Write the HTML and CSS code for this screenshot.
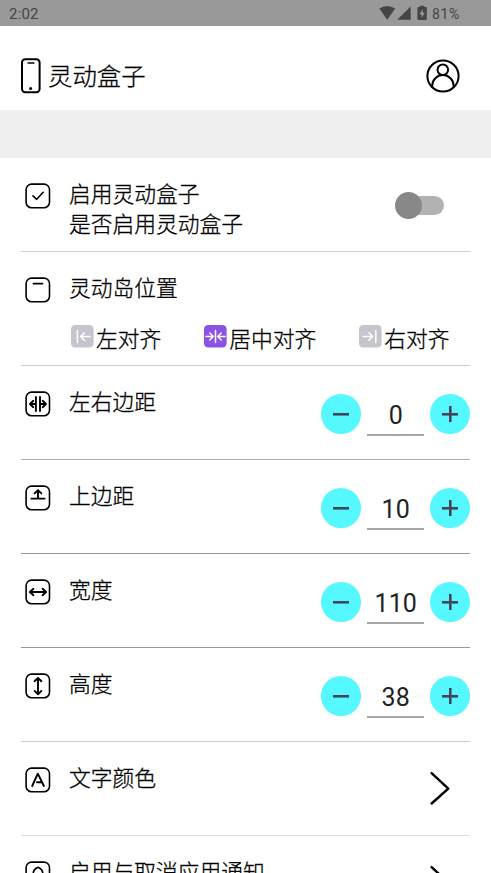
FILE: index.html
```html
<!DOCTYPE html>
<html lang="zh-CN">
<head>
<meta charset="utf-8">
<title>灵动盒子</title>
<link rel="stylesheet" href="styles.css">
</head>
<body>
<div class="status">
  <span class="clock">2:02</span>
  <svg class="signals" width="50" height="26" viewBox="0 0 50 26">
    <path d="M.3 8.6Q8.3 3.2 16.2 8.6L8.3 19.8z"/>
    <path d="M31.7 6.4v13.4H18.2z"/>
    <path fill-rule="evenodd" d="M40.8 7V5.8h4.4V7h1.6q1 0 1 1v11q0 1-1 1h-7.4q-1 0-1-1V8q0-1 1-1zM43.8 9l-3.3 5.2h2v3.8l3.3-5.2h-2z"/>
  </svg>
  <span class="charge">81%</span>
</div>
<header class="header">
  <svg class="phone" width="20" height="36" viewBox="0 0 20 36"><rect x="1" y="1.2" width="17.6" height="33" rx="3.2"/><path d="M7 5h6"/><circle class="dot" cx="9.6" cy="30.6" r="1.5"/></svg>
  <h1>灵动盒子</h1>
  <svg class="user" width="34" height="34" viewBox="0 0 34 34"><circle cx="17" cy="17" r="15.6"/><circle cx="16.8" cy="10.8" r="5.3"/><path d="M6.2 28.2v-1.4a10.7 10.7 0 0 1 21.4 0v1.4"/></svg>
</header>
<div class="banner"></div>
<main class="list">
  <section class="row tone-light">
    <svg class="icon" width="26" height="26" viewBox="0 0 26 26"><rect x="1.1" y="1.1" width="23.4" height="23.6" rx="5.5"/><path d="M8 12.8l3.7 3.5 6.5-7"/></svg>
    <div class="label">启用灵动盒子<br>是否启用灵动盒子</div>
    <div class="switch"><span class="thumb"></span></div>
  </section>
  <section class="row tall tone-light">
    <svg class="icon" width="26" height="26" viewBox="0 0 26 26"><rect x="1.1" y="1.1" width="23.4" height="23.6" rx="5.5"/><path class="heavy" d="M8.5 6.6h9"/></svg>
    <div class="label">灵动岛位置</div>
    <div class="options">
      <div class="option"><svg width="23" height="23" viewBox="0 0 23 23"><rect width="22.6" height="22.6" rx="4.2"/><path d="M6.4 5.5v12M19 11.5H9.7M13.4 7.7l-3.8 3.8 3.8 3.8"/></svg><span>左对齐</span></div>
      <div class="option active"><svg width="23" height="23" viewBox="0 0 23 23"><rect width="22.6" height="22.6" rx="4.2"/><path d="M11.5 5.5v12M2 11.5h7M5.8 8l3.5 3.5L5.8 15M21 11.5h-7M17.2 8l-3.5 3.5 3.5 3.5"/></svg><span>居中对齐</span></div>
      <div class="option"><svg width="23" height="23" viewBox="0 0 23 23"><rect width="22.6" height="22.6" rx="4.2"/><path d="M16.8 5.5v12M4 11.5h9.5M9.9 7.7l3.8 3.8-3.8 3.8"/></svg><span>右对齐</span></div>
    </div>
  </section>
  <section class="row tone-mid">
    <svg class="icon" width="26" height="26" viewBox="0 0 26 26"><rect x="1.1" y="1.1" width="23.4" height="23.6" rx="5.5"/><path class="heavy" d="M10.9 6v14M15 6v14M10 13H5M8.3 9.8L5 13l3.3 3.2M16 13h5M17.7 9.8L21 13l-3.3 3.2"/></svg>
    <div class="label">左右边距</div>
    <div class="stepper"><button class="minus"></button><span class="value">0</span><button class="plus"></button></div>
  </section>
  <section class="row tone-dark">
    <svg class="icon" width="26" height="26" viewBox="0 0 26 26"><rect x="1.1" y="1.1" width="23.4" height="23.6" rx="5.5"/><path class="heavy" d="M6.4 13.6h13.2M13 13.6V5.5M9.6 8.4L13 5.2l3.4 3.2"/></svg>
    <div class="label">上边距</div>
    <div class="stepper"><button class="minus"></button><span class="value">10</span><button class="plus"></button></div>
  </section>
  <section class="row tone-dark">
    <svg class="icon" width="26" height="26" viewBox="0 0 26 26"><rect x="1.1" y="1.1" width="23.4" height="23.6" rx="5.5"/><path class="heavy" d="M5 13h16M8.4 9.8L4.9 13l3.5 3.2M17.6 9.8l3.5 3.2-3.5 3.2"/></svg>
    <div class="label">宽度</div>
    <div class="stepper"><button class="minus"></button><span class="value">110</span><button class="plus"></button></div>
  </section>
  <section class="row tone-light">
    <svg class="icon" width="26" height="26" viewBox="0 0 26 26"><rect x="1.1" y="1.1" width="23.4" height="23.6" rx="5.5"/><path class="heavy" d="M13 5v16M9.6 8.2L13 4.9l3.4 3.3M9.6 17.9l3.4 3.3 3.4-3.3"/></svg>
    <div class="label">高度</div>
    <div class="stepper"><button class="minus"></button><span class="value">38</span><button class="plus"></button></div>
  </section>
  <section class="row tone-pale">
    <svg class="icon" width="26" height="26" viewBox="0 0 26 26"><rect x="1.1" y="1.1" width="23.4" height="23.6" rx="5.5"/><path class="heavy" d="M7.2 19L12.8 6.7 18.9 19M12 15.2h5"/></svg>
    <div class="label">文字颜色</div>
    <svg class="chevron" width="22" height="36" viewBox="0 0 22 36"><path d="M2.6 3.1L19.3 18.6 2.6 33.5"/></svg>
  </section>
  <section class="row tone-pale">
    <svg class="icon" width="26" height="26" viewBox="0 0 26 26"><rect x="1.1" y="1.1" width="23.4" height="23.6" rx="5.5"/><path d="M7 18.5h12M8.2 18.5v-6.3Q8.6 8.3 12 6.8q1-.9 2 0 3.4 1.5 3.8 5.4v6.3"/></svg>
    <div class="label">启用与取消应用通知</div>
    <svg class="chevron" width="22" height="36" viewBox="0 0 22 36"><path d="M2.6 3.1L19.3 18.6 2.6 33.5"/></svg>
  </section>
</main>
</body>
</html>
```
FILE: styles.css
```css
* { box-sizing: border-box; }
html, body { height: 100%; overflow: hidden; }
body {
  margin: 0;
  background: #fff;
  color: #000;
  font-family: Roboto, "Noto Sans CJK SC", sans-serif;
}
svg { display: block; flex: none; }
.status {
  height: 26px;
  display: flex;
  align-items: center;
  padding: 0 30px 0 9px;
  background: #999;
  color: #444;
  font-size: 15px;
  line-height: 26px;
}
.clock { letter-spacing: .2px; padding-top: 2px; }
.signals { margin-left: auto; fill: #444; }
.charge { margin-left: 3px; width: 29px; font-size: 14px; padding-top: 2px; letter-spacing: .6px; }
.header {
  height: 84px;
  display: flex;
  align-items: flex-start;
  padding: 0 31px 0 20.5px;
}
.phone, .user { fill: none; stroke: #000; stroke-width: 2; stroke-linecap: round; }
.phone { margin-top: 32px; }
.phone path { stroke-width: 1.3; }
.phone .dot { fill: #000; stroke: none; }
.user { margin: 33px 0 0 auto; }
h1, .label, .option {
  font-family: "Noto Sans CJK SC", sans-serif;
  font-weight: 300;
  -webkit-text-stroke: .3px #000;
}
h1 {
  margin: 31px 0 0 7.5px;
  font-size: 24.4px;
  line-height: 36px;
}
.banner { height: 48px; background: #f0f0f0; }
.list { padding: 0 21px; }
.row {
  height: 94px;
  display: grid;
  grid-template-columns: 44px 1fr auto;
  align-items: start;
  padding-left: 4px;
  border-bottom: 1px solid #ccc;
}
.tall { height: 114px; }
.tone-mid { border-color: #b0b0b0; }
.tone-dark { border-color: #999; }
.tone-pale { border-color: #e0e0e0; }
.icon {
  margin-top: 25px;
  fill: none;
  stroke: #000;
  stroke-width: 1.6;
  stroke-linecap: round;
  stroke-linejoin: round;
}
.icon .heavy { stroke-width: 1.9; }
.label {
  padding-top: 20px;
  font-size: 21.75px;
  line-height: 29.5px;
  white-space: nowrap;
}
.switch {
  display: flex;
  align-items: center;
  width: 47px;
  height: 19px;
  margin: 38px 26px 0 0;
  border-radius: 10px;
  background: #b2b2b2;
}
.thumb { width: 27px; height: 27px; flex: none; margin-left: -2px; border-radius: 50%; background: #888; }
.options {
  grid-column: 1 / -1;
  display: flex;
  justify-content: space-between;
  padding: 7px 20.5px 0 46px;
}
.option {
  display: flex;
  align-items: center;
  gap: 2px;
  font-size: 21.75px;
  line-height: 29px;
}
.option svg { margin-top: -2px; }
.option rect { fill: #c6c5cd; }
.active rect { fill: #8c52e5; }
.option path { fill: none; stroke: #fff; stroke-width: 1.5; stroke-linecap: round; stroke-linejoin: round; }
.stepper {
  display: flex;
  gap: 6px;
  padding-top: 28.3px;
}
button {
  width: 39.6px;
  height: 39.6px;
  padding: 0;
  border: 0;
  border-radius: 50%;
  background-color: #56f8ff;
  background-repeat: no-repeat;
  background-position: center;
}
.minus { background-image: linear-gradient(#454559, #454559); background-size: 16px 2.6px; }
.plus {
  background-image: linear-gradient(#454559, #454559), linear-gradient(#454559, #454559);
  background-size: 16px 2.6px, 2.6px 16px;
}
.value {
  width: 57.5px;
  height: 41.3px;
  border-bottom: 2px solid #a5a5a5;
  color: #222;
  font-size: 25px;
  line-height: 43px;
  text-align: center;
}
.chevron { margin: 28px 19px 0 0; fill: none; stroke: #000; stroke-width: 2.4; stroke-linecap: round; stroke-linejoin: round; }
```
